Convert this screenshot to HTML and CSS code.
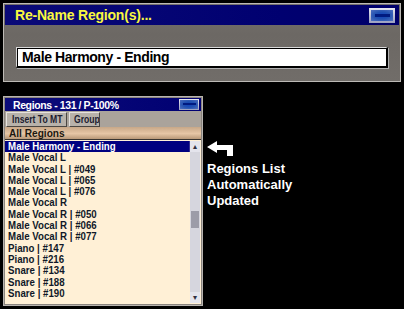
FILE: index.html
```html
<!DOCTYPE html>
<html>
<head>
<meta charset="utf-8">
<link rel="stylesheet" href="styles.css">
</head>
<body>
<div class="dlg">
  <div class="dlg-title">
    <span class="dlg-caption">Re-Name Region(s)...</span>
    <span class="min-btn"><span class="min-bar"></span></span>
  </div>
  <div class="dlg-body">
    <div class="field">Male Harmony - Ending</div>
  </div>
</div>
<div class="lower">
  <div class="panel">
    <div class="panel-title">
      <span class="panel-caption">Regions - 131 / P-100%</span>
      <span class="min-btn small"><span class="min-bar"></span></span>
    </div>
    <div class="toolbar">
      <span class="tbtn"><span class="tx">Insert To MT</span></span>
      <span class="tbtn"><span class="tx">Group</span></span>
    </div>
    <div class="header"><span class="tx">All Regions</span></div>
    <div class="listwrap">
      <ul class="list">
        <li class="sel">Male Harmony - Ending</li>
        <li>Male Vocal L</li>
        <li>Male Vocal L | #049</li>
        <li>Male Vocal L | #065</li>
        <li>Male Vocal L | #076</li>
        <li>Male Vocal R</li>
        <li>Male Vocal R | #050</li>
        <li>Male Vocal R | #066</li>
        <li>Male Vocal R | #077</li>
        <li>Piano | #147</li>
        <li>Piano | #216</li>
        <li>Snare | #134</li>
        <li>Snare | #188</li>
        <li>Snare | #190</li>
      </ul>
      <div class="scroll">
        <span class="sarrow">&#9652;</span>
        <span class="strack"><span class="thumb"></span></span>
        <span class="sarrow">&#9662;</span>
      </div>
    </div>
  </div>
  <div class="note">
    <svg class="arrow" width="28" height="16" viewBox="0 0 28 16">
      <path d="M0 6 L10 0 L10 4 L26 4 L26 15 L20 15 L20 9 L10 9 L10 12 Z" fill="#fff"/>
    </svg>
    <div class="note-text">Regions List<br>Automatically<br>Updated</div>
  </div>
</div>
</body>
</html>
```
FILE: styles.css
```css
html, body {
  margin: 0;
  padding: 0;
  background: #000;
  width: 404px;
  height: 309px;
  overflow: hidden;
  font-family: "Liberation Sans", Arial, sans-serif;
}
.tx {
  display: inline-block;
  transform-origin: left center;
  white-space: nowrap;
}
.dlg {
  margin: 3px 3px 0 3px;
  height: 76px;
  border: 1px solid #bdbab6;
  padding: 1px 1px 0 1px;
  background: linear-gradient(180deg, #74706b 0%, #6c6864 40%, #716d69 100%);
  display: flex;
  flex-direction: column;
}
.dlg-title {
  height: 20px;
  background: linear-gradient(90deg, #0a0a78 0%, #000070 70%, #00006a 100%);
  display: flex;
  align-items: center;
  justify-content: space-between;
  padding: 0 4px 0 10px;
}
.dlg-caption {
  color: #f8f840;
  font-weight: bold;
  font-size: 14px;
  letter-spacing: -0.2px;
}
.min-btn {
  width: 26px;
  height: 15px;
  background: linear-gradient(180deg, #e8e8f0, #9aa0c0);
  display: flex;
  align-items: center;
  justify-content: center;
  box-sizing: border-box;
  padding: 2px;
}
.min-bar {
  display: block;
  width: 100%;
  height: 100%;
  background: radial-gradient(ellipse at center, #1040c0 0%, #2050b0 45%, #5070c0 100%);
  position: relative;
}
.min-bar::after {
  content: "";
  position: absolute;
  left: 4px;
  right: 3px;
  top: 4px;
  height: 3px;
  background: #001a80;
}
.dlg-body {
  flex: 1;
  padding: 22px 11px 0 11px;
}
.field {
  height: 21px;
  box-sizing: border-box;
  background: #fff;
  border-top: 1px solid #d8d8d8;
  border-left: 1px solid #d8d8d8;
  border-right: 2px solid #000;
  border-bottom: 2px solid #000;
  box-shadow: inset 1px 1px 0 #000, 1px 1px 0 #b0b0b0;
  font-weight: bold;
  font-size: 14px;
  letter-spacing: -0.4px;
  color: #000;
  padding: 1px 0 0 5px;
  line-height: 17px;
}
.lower {
  display: flex;
  margin-top: 14px;
}
.panel {
  margin-left: 3px;
  width: 200px;
  height: 210px;
  box-sizing: border-box;
  border: 1px solid #b8b4b0;
  padding: 1px;
  background: #8a847e;
  display: flex;
  flex-direction: column;
}
.panel-title {
  height: 13px;
  background: linear-gradient(90deg, #0c0c7a 0%, #000072 100%);
  display: flex;
  align-items: center;
  justify-content: space-between;
  padding: 0 2px 0 8px;
}
.panel-caption {
  color: #fff;
  font-weight: bold;
  font-size: 10.5px;
  letter-spacing: -0.4px;
}
.min-btn.small {
  width: 20px;
  height: 11px;
  padding: 1px;
}
.min-btn.small .min-bar::after {
  left: 3px;
  right: 2px;
  top: 3px;
  height: 2px;
}
.toolbar {
  height: 16px;
  display: flex;
  align-items: center;
  gap: 2px;
  padding: 0 1px;
  background: #aaa39b;
}
.tbtn {
  height: 15px;
  box-sizing: border-box;
  border-top: 1px solid #e6e2de;
  border-left: 1px solid #e6e2de;
  border-right: 1px solid #4a4642;
  border-bottom: 1px solid #4a4642;
  background: #b8b2aa;
  font-weight: bold;
  font-size: 10.5px;
  color: #1c1c30;
  line-height: 13px;
  overflow: hidden;
}
.tbtn:first-child { width: 61px; padding-left: 5px; }
.tbtn:nth-child(2) { width: 31px; padding-left: 4px; }
.tbtn .tx { transform: scaleX(0.82); }
.header {
  height: 12px;
  background: linear-gradient(180deg, #c8a888 0%, #e6c6a6 55%, #b89878 100%);
  font-weight: bold;
  font-size: 11px;
  color: #1c1810;
  padding-left: 4px;
  line-height: 12px;
}
.header .tx { transform: scaleX(0.92); }
.listwrap {
  flex: 1;
  display: flex;
  background: #fff0d6;
  border-top: 1px solid #3a3632;
}
.list {
  list-style: none;
  margin: 0;
  padding: 1px 0 0 0;
  flex: 1;
  min-width: 0;
}
.list li {
  box-sizing: border-box;
  height: 11.3px;
  line-height: 11.3px;
  font-weight: bold;
  font-size: 11px;
  color: #101828;
  padding-left: 3.5px;
  white-space: nowrap;
  transform: scaleX(0.88);
  transform-origin: left;
}
.list li.sel {
  width: 210px;
  background: #000080;
  color: #fff;
}
.scroll {
  width: 10px;
  flex: none;
  background: #d6d6de;
  display: flex;
  flex-direction: column;
  margin: 1px 1px 1px 0;
}
.sarrow {
  height: 11px;
  font-size: 8px;
  line-height: 11px;
  text-align: center;
  background: #e4e4ec;
  color: #303040;
}
.strack {
  flex: 1;
  position: relative;
}
.thumb {
  position: absolute;
  left: 1px;
  right: 1px;
  top: 59px;
  height: 17px;
  background: #9c9ca8;
}
.note {
  padding: 45px 0 0 4px;
  color: #fff;
}
.arrow { display: block; }
.note-text {
  margin-top: 4px;
  font-weight: bold;
  font-size: 13px;
  line-height: 16px;
}
```
